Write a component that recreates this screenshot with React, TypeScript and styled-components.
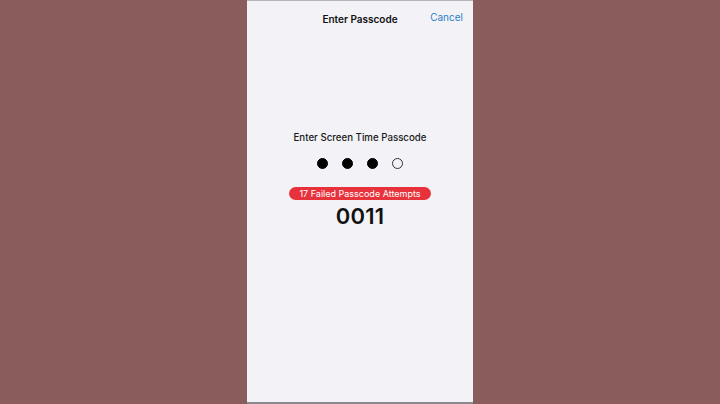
import { createGlobalStyle, styled } from "styled-components";

const Global = createGlobalStyle`
  html, body {
    margin: 0;
    padding: 0;
    background: #8b5c5c;
  }
  body {
    font-family: "Inter", "Liberation Sans", Arial, sans-serif;
  }
`;

const Stage = styled.div`
  width: 720px;
  height: 404px;
  display: flex;
  justify-content: center;
  background: #8b5c5c;
  overflow: hidden;
`;

const Phone = styled.div`
  width: 226px;
  height: 401px;
  background: #f2f2f7;
  border-top: 1px solid #b9b3b5;
  border-bottom: 2px solid #8a8a8e;
  display: flex;
  flex-direction: column;
  align-items: center;
`;

const NavBar = styled.div`
  position: relative;
  width: 100%;
  height: 34px;
  display: flex;
  align-items: center;
  justify-content: center;
`;

const NavTitle = styled.div`
  font-size: 10px;
  font-weight: 600;
  color: #111;
  margin-top: 1px;
`;

const CancelButton = styled.button`
  position: absolute;
  right: 10px;
  top: 10px;
  border: none;
  background: none;
  padding: 0;
  font-family: inherit;
  font-size: 10px;
  color: #2d7fc4;
`;

const Prompt = styled.div`
  margin-top: 97px;
  font-size: 9.7px;
  font-weight: 500;
  color: #1a1a1a;
`;

const Dots = styled.div`
  margin-top: 15px;
  display: flex;
  gap: 14px;
`;

const Dot = styled.span<{ $filled: boolean }>`
  width: 11px;
  height: 11px;
  border-radius: 50%;
  box-sizing: border-box;
  background: ${({ $filled }) => ($filled ? "#000" : "transparent")};
  border: 1px solid ${({ $filled }) => ($filled ? "#000" : "#333")};
`;

const FailPill = styled.div`
  margin-top: 18px;
  width: 142px;
  height: 13px;
  border-radius: 7px;
  background: #e8323b;
  color: #fff;
  font-size: 9px;
  display: flex;
  align-items: center;
  justify-content: center;
`;

const Code = styled.div`
  margin-top: 3px;
  font-size: 22px;
  font-weight: 600;
  color: #111;
  letter-spacing: 0.2px;
`;

const App = () => {
  return (
    <Stage>
      <Global />
      <Phone>
        <NavBar>
          <NavTitle>Enter Passcode</NavTitle>
          <CancelButton>Cancel</CancelButton>
        </NavBar>
        <Prompt>Enter Screen Time Passcode</Prompt>
        <Dots>
          {[true, true, true, false].map((f, i) => (
            <Dot key={i} $filled={f} />
          ))}
        </Dots>
        <FailPill>17 Failed Passcode Attempts</FailPill>
        <Code>0011</Code>
      </Phone>
    </Stage>
  );
};

export default App;
